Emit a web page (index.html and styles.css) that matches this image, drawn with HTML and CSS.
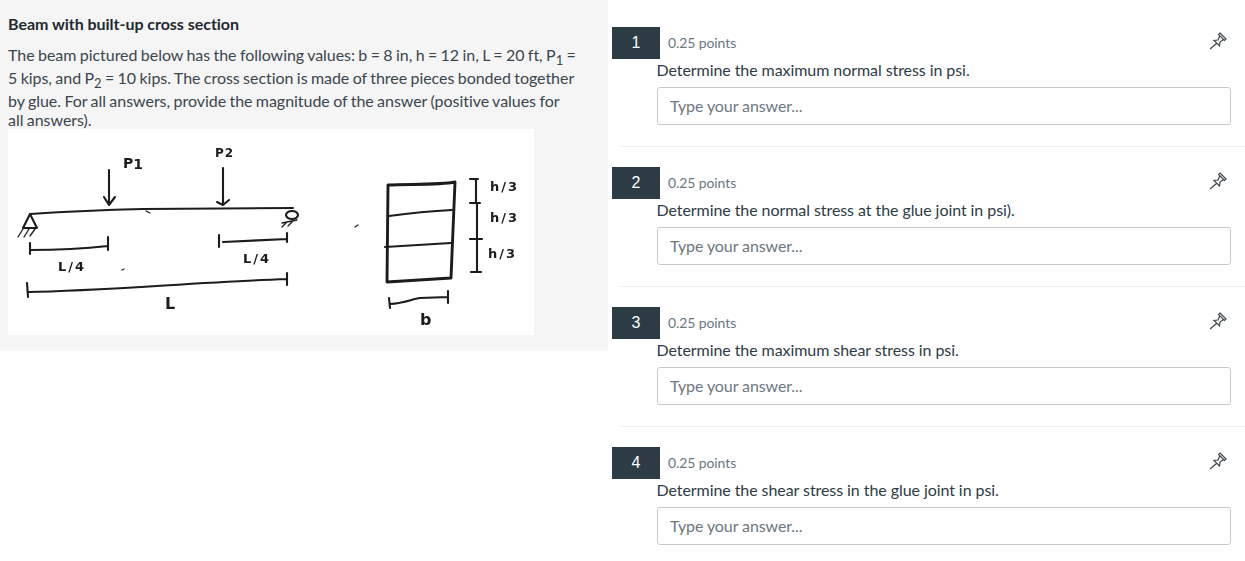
FILE: index.html
```html
<!DOCTYPE html>
<html lang="en">
<head>
<meta charset="utf-8">
<title>Beam with built-up cross section</title>
<link rel="stylesheet" href="styles.css">
</head>
<body>
<main class="page">
  <section class="stimulus">
    <h2 class="stimulus-title">Beam with built-up cross section</h2>
    <p class="stimulus-text">The beam pictured below has the following values: b = 8 in, h = 12 in, L = 20 ft, P<sub>1</sub> = 5 kips, and P<sub>2</sub> = 10 kips. The cross section is made of three pieces bonded together by glue. For all answers, provide the magnitude of the answer (positive values for all answers).</p>
    <svg class="diagram" viewBox="8 129 526 206" width="526" height="206" role="img" aria-label="Beam diagram and cross section">
      <g class="ink">
        <path d="M30 214 C60 212 100 210 143 209 C190 209 240 208 293 208"/>
        <path d="M109 170 L109 205 M104 197 L109 205 L115 197"/>
        <path d="M223 168 L223 205 M217 202 L223 205 L229 200"/>
        <path d="M30 214 L23 228 L37 228 Z"/>
        <path class="thin" d="M18 237 L23 229 M24 237 L29 229 M30 236 L35 229"/>
        <ellipse cx="292" cy="215" rx="6" ry="4"/>
        <path class="thin" d="M282 223 L297 220 M282 227 L286 223 M288 226 L292 222"/>
        <path d="M30 243 L30 254 M30 250 C60 250 90 248 108 246 M108 237 L108 250"/>
        <path d="M219 235 L219 247 M223 242 L287 239 M287 233 L287 242"/>
        <path d="M27 283 L28 297 M28 292 C100 291 200 282 287 279 M287 273 L287 285"/>
        <path class="thick" d="M388 185 C410 184 440 185 455 182 L451 278 L387 282 Z"/>
        <path d="M389 216 C410 213 430 211 452 210 M385 247 L451 243"/>
        <path d="M470 179 L478 179 M476 179 L476 203 M470 203 L480 203 M477 203 L477 239 M470 239 L482 239 M477 239 L477 272 M471 272 L481 272"/>
        <path d="M389 298 L390 308 M390 304 C405 303 412 299 420 298 L448 297 M448 291 L448 303"/>
        <path class="thin" d="M355 227 L358 225 M146 211 L150 213 M122 270 L124 269"/>
      </g>
      <g class="hand">
        <text x="123" y="168">P<tspan dy="1">1</tspan></text>
        <text x="215" y="157" class="hand-small">P2</text>
        <text x="58" y="271" class="hand-wide">L/4</text>
        <text x="243" y="263" class="hand-wide">L/4</text>
        <text x="165" y="309" class="hand-big">L</text>
        <text x="490" y="191" class="hand-wide">h/3</text>
        <text x="490" y="222" class="hand-wide">h/3</text>
        <text x="488" y="258" class="hand-wide">h/3</text>
        <text x="420" y="325" class="hand-big">b</text>
      </g>
    </svg>
  </section>

  <section class="questions">
    <article class="question">
      <header class="question-head">
        <span class="question-number">1</span>
        <span class="question-points">0.25 points</span>
        <svg class="pin" viewBox="0 0 18 18" width="18" height="18" aria-hidden="true"><path d="M11 1 L17 7 L15.5 8.5 L9.5 2.5 Z M10.7 4 L9 8 L5 8.5 L10.5 14 L11 10 L14.5 7.5 M7.5 11.5 L1 17"/></svg>
      </header>
      <p class="question-text">Determine the maximum normal stress in psi.</p>
      <input class="answer" type="text" placeholder="Type your answer...">
    </article>
    <article class="question">
      <header class="question-head">
        <span class="question-number">2</span>
        <span class="question-points">0.25 points</span>
        <svg class="pin" viewBox="0 0 18 18" width="18" height="18" aria-hidden="true"><path d="M11 1 L17 7 L15.5 8.5 L9.5 2.5 Z M10.7 4 L9 8 L5 8.5 L10.5 14 L11 10 L14.5 7.5 M7.5 11.5 L1 17"/></svg>
      </header>
      <p class="question-text">Determine the normal stress at the glue joint in psi).</p>
      <input class="answer" type="text" placeholder="Type your answer...">
    </article>
    <article class="question">
      <header class="question-head">
        <span class="question-number">3</span>
        <span class="question-points">0.25 points</span>
        <svg class="pin" viewBox="0 0 18 18" width="18" height="18" aria-hidden="true"><path d="M11 1 L17 7 L15.5 8.5 L9.5 2.5 Z M10.7 4 L9 8 L5 8.5 L10.5 14 L11 10 L14.5 7.5 M7.5 11.5 L1 17"/></svg>
      </header>
      <p class="question-text">Determine the maximum shear stress in psi.</p>
      <input class="answer" type="text" placeholder="Type your answer...">
    </article>
    <article class="question">
      <header class="question-head">
        <span class="question-number">4</span>
        <span class="question-points">0.25 points</span>
        <svg class="pin" viewBox="0 0 18 18" width="18" height="18" aria-hidden="true"><path d="M11 1 L17 7 L15.5 8.5 L9.5 2.5 Z M10.7 4 L9 8 L5 8.5 L10.5 14 L11 10 L14.5 7.5 M7.5 11.5 L1 17"/></svg>
      </header>
      <p class="question-text">Determine the shear stress in the glue joint in psi.</p>
      <input class="answer" type="text" placeholder="Type your answer...">
    </article>
  </section>
</main>
</body>
</html>
```

FILE: styles.css
```css
* { box-sizing: border-box; }
html, body { margin: 0; padding: 0; background: #fff; }
body { font-family: Lato, "Noto Sans", sans-serif; color: #2d3b45; }

.page { display: flex; align-items: flex-start; }

.stimulus {
  width: 608px;
  height: 351px;
  flex: none;
  background: #f5f5f5;
  padding: 15px 8px 0;
}
.stimulus-title {
  margin: 0 0 12px;
  font-size: 16px;
  line-height: 18px;
  font-weight: 700;
  color: #1f2a30;
  letter-spacing: -0.03px;
}
.stimulus-text {
  margin: 0;
  font-size: 16px;
  color: #3a464e;
  width: 568px;
  letter-spacing: -0.04px;
  word-spacing: -0.65px;
}
.stimulus-text sub { font-size: 13px; }
.diagram { display: block; background: #fff; filter: blur(0.35px); }
.ink path, .ink ellipse { fill: none; stroke: #1c1c1c; stroke-width: 2.1; stroke-linecap: round; stroke-linejoin: round; }
.ink .thin { stroke-width: 1.3; }
.ink .thick { stroke-width: 2.9; }
.hand text { font-family: "DejaVu Sans", sans-serif; font-size: 14px; font-weight: 700; fill: #1c1c1c; }
.hand .hand-small { font-size: 12px; letter-spacing: 1px; }
.hand .hand-wide { font-size: 13px; letter-spacing: 2px; }
.hand .hand-big { font-size: 16px; }

.questions { flex: 1; padding: 27px 0 0 4px; }
.question { height: 140px; position: relative; }
.question::after {
  content: "";
  position: absolute;
  left: 8px;
  right: 0;
  top: 119px;
  border-top: 1px solid #f1f1f1;
}
.question-head { display: flex; align-items: center; height: 32px; padding-right: 18px; }
.question-number {
  width: 48px;
  height: 32px;
  background: #2d3b45;
  color: #fff;
  font-family: "Liberation Sans", Arial, sans-serif;
  font-size: 16px;
  display: flex;
  align-items: center;
  justify-content: center;
}
.question-points { margin-left: 8px; margin-top: -1px; font-size: 14px; color: #6b7780; letter-spacing: -0.1px; }
.pin { margin-left: auto; margin-top: -5px; fill: none; stroke: #3d464d; stroke-width: 1.2; }
.question-text { margin: 1px 0 8px 44.5px; font-size: 16px; line-height: 19px; color: #2d3b45; letter-spacing: -0.07px; }
.answer {
  display: block;
  margin-left: 45px;
  width: 574px;
  height: 38px;
  padding: 0 12px 2px;
  border: 1px solid #c7cdd1;
  border-radius: 3px;
  background: #fff;
  font-family: inherit;
  font-size: 16px;
  letter-spacing: -0.1px;
  color: #2d3b45;
  outline: none;
}
.answer::placeholder { color: #6b7780; opacity: 1; }
```
